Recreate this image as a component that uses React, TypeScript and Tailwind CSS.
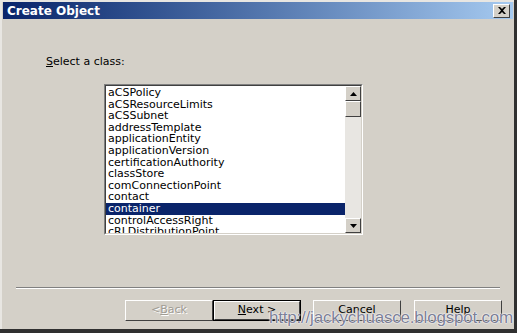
import React from "react";

const items = [
  "aCSPolicy",
  "aCSResourceLimits",
  "aCSSubnet",
  "addressTemplate",
  "applicationEntity",
  "applicationVersion",
  "certificationAuthority",
  "classStore",
  "comConnectionPoint",
  "contact",
  "container",
  "controlAccessRight",
  "cRLDistributionPoint",
];

function Btn({ children, def, disabled }: { children: React.ReactNode; def?: boolean; disabled?: boolean }) {
  if (def) {
    return (
      <div className="border border-black">
        <div className="flex h-[19px] w-[86px] items-center justify-center border border-t-white border-l-white border-r-[#404040] border-b-[#404040] bg-[#d4d0c8] text-[11px] text-black">
          {children}
        </div>
      </div>
    );
  }
  return (
    <div
      className={
        "flex h-[21px] w-[88px] items-center justify-center border border-t-white border-l-white border-r-[#404040] border-b-[#404040] bg-[#d4d0c8] text-[11px] " +
        (disabled ? "text-[#a09c94]" : "text-black")
      }
      style={disabled ? { textShadow: "1px 1px 0 #fff" } : undefined}
    >
      {children}
    </div>
  );
}

export default function App() {
  return (
    <div className="h-[336px] w-[521px] bg-white" style={{ fontFamily: "Tahoma, 'DejaVu Sans', 'Liberation Sans', sans-serif" }}>
      <div className="flex h-[333px] w-[517px] flex-col border-r-[3px] border-b-[4px] border-r-[#303030] border-b-[#303030]">
        <div className="flex flex-1 flex-col border-l-2 border-t-2 border-l-[#e8e6e2] border-t-[#e8e6e2] bg-[#d4d0c8] pl-px pr-px">
          <div className="flex h-[17px] items-center justify-between bg-gradient-to-r from-[#0a246a] to-[#a6caf0] pl-[4px] pr-[3px]">
            <span className="text-[12px] font-bold text-white">Create Object</span>
            <div className="flex h-[14px] w-[17px] items-center justify-center border border-t-white border-l-white border-r-[#404040] border-b-[#404040] bg-[#d4d0c8]">
              <svg width="8" height="7" viewBox="0 0 8 7">
                <path d="M0 0h2l2 2 2-2h2L5 3.5 8 7H6L4 5 2 7H0l3-3.5z" fill="black" />
              </svg>
            </div>
          </div>
          <div className="flex-1 pl-[43px] pt-[36px] text-[11px] text-black">
            <div className="leading-[13px]">
              <span className="underline">S</span>elect a class:
            </div>
            <div className="ml-[58px] mt-[16px] flex h-[151px] w-[259px] border border-t-[#808080] border-l-[#808080] border-r-white border-b-white">
              <div className="flex flex-1 border border-t-[#404040] border-l-[#404040] border-r-[#d4d0c8] border-b-[#d4d0c8] bg-white">
                <div className="flex-1 overflow-hidden pt-[1px]">
                  {items.map((it) => (
                    <div
                      key={it}
                      className={
                        "h-[11.6px] pl-[2px] text-[11px] leading-[11.6px] " +
                        (it === "container" ? "bg-[#0a246a] text-white" : "text-black")
                      }
                    >
                      {it}
                    </div>
                  ))}
                </div>
                <div className="flex w-[16px] flex-col bg-[#e8e6e2]">
                  <div className="flex h-[15px] items-center justify-center border border-t-white border-l-white border-r-[#404040] border-b-[#404040] bg-[#d4d0c8]">
                    <svg width="7" height="4" viewBox="0 0 7 4"><path d="M3.5 0L7 4H0z" fill="black" /></svg>
                  </div>
                  <div className="h-[16px] border border-t-white border-l-white border-r-[#404040] border-b-[#404040] bg-[#d4d0c8]" />
                  <div className="flex-1" />
                  <div className="flex h-[15px] items-center justify-center border border-t-white border-l-white border-r-[#404040] border-b-[#404040] bg-[#d4d0c8]">
                    <svg width="7" height="4" viewBox="0 0 7 4"><path d="M0 0h7L3.5 4z" fill="black" /></svg>
                  </div>
                </div>
              </div>
            </div>
          </div>
          <div className="mx-[13px] h-[2px] border-t border-b border-t-[#808080] border-b-white" />
          <div className="relative flex h-[40px] items-start gap-[12px] pl-[122px] pt-[11px]">
            <div className="flex">
              <Btn disabled>
                &lt; <span className="underline">B</span>ack
              </Btn>
              <Btn def>
                <span className="underline">N</span>ext &gt;
              </Btn>
            </div>
            <Btn>Cancel</Btn>
            <div className="ml-px">
              <Btn>Help</Btn>
            </div>
            <div
              className="absolute left-[266px] top-[20px] text-[17px] leading-[18px] tracking-[-0.2px] text-[#7c8096]"
              style={{ fontFamily: "'Liberation Sans', sans-serif", textShadow: "0 0 1px #fff, 0 0 1px #fff, 0 0 2px #fff" }}
            >
              http://jackychuasce.blogspot.com
            </div>
          </div>
        </div>
      </div>
    </div>
  );
}
